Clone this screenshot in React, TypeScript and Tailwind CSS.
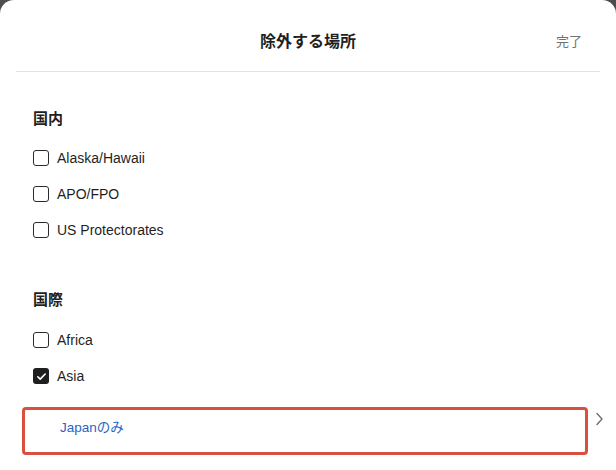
import React from "react";

const jp = "font-['Liberation_Sans','Noto_Sans_CJK_JP',sans-serif]";

interface Option {
  label: string;
  checked?: boolean;
}

const domestic: Option[] = [
  { label: "Alaska/Hawaii" },
  { label: "APO/FPO" },
  { label: "US Protectorates" },
];

const international: Option[] = [{ label: "Africa" }, { label: "Asia", checked: true }];

const CheckRow: React.FC<{ option: Option }> = ({ option }) => (
  <label className="flex items-center h-[36px] gap-[8px]">
    {option.checked ? (
      <span className="w-[16px] h-[16px] rounded-[3px] bg-[#1f1f1f] flex items-center justify-center">
        <svg width="11" height="11" viewBox="0 0 12 12" fill="none">
          <path d="M2 6.3l2.6 2.6L10 3.3" stroke="#fff" strokeWidth="1.8" strokeLinecap="round" strokeLinejoin="round" />
        </svg>
      </span>
    ) : (
      <span className="w-[16px] h-[16px] rounded-[3px] border-[1.5px] border-[#2a2a2a] bg-white" />
    )}
    <span className="text-[14px] text-[#1f1f1f] leading-none">{option.label}</span>
  </label>
);

const SectionTitle: React.FC<{ children: React.ReactNode }> = ({ children }) => (
  <h3 className="text-[15px] font-bold text-[#1f1f1f] leading-[22px]">{children}</h3>
);

export default function App() {
  return (
    <div className={`h-[470px] w-[616px] bg-[#4d4d4d] overflow-hidden ${jp}`}>
      <div className="h-full bg-white rounded-t-[14px] flex flex-col">
        {/* Header */}
        <div className="relative h-[71px] flex items-start justify-center">
          <h2 className="mt-[30px] text-[16px] font-bold text-[#1f1f1f] leading-[24px]">除外する場所</h2>
          <button className="absolute right-[34px] top-[33px] text-[13px] text-[#707070] leading-[18px]">完了</button>
        </div>
        <div className="mx-4 h-px bg-[#e2e2e2]" />

        {/* Content */}
        <div className="pl-[33px] pt-[36px]">
          <SectionTitle>国内</SectionTitle>
          <div className="mt-[10px]">
            {domestic.map((o) => (
              <CheckRow key={o.label} option={o} />
            ))}
          </div>

          <div className="mt-[41px]">
            <SectionTitle>国際</SectionTitle>
          </div>
          <div className="mt-[11px]">
            {international.map((o) => (
              <CheckRow key={o.label} option={o} />
            ))}
          </div>
        </div>

        {/* Japan only row */}
        <div className="relative mt-[12px] h-[48px]">
          <div className="absolute left-[22px] top-[1px] w-[566px] h-[48px] border-[3px] border-[#d9503f] rounded-[4px]" />
          <div className="absolute left-[60px] top-[12px] text-[13.5px] text-[#2a64c4] leading-[20px]">Japanのみ</div>
          <svg className="absolute left-[595px] top-[6px]" width="9" height="14" viewBox="0 0 9 14" fill="none">
            <path d="M2 1.5l5 5.5-5 5.5" stroke="#6f6f6f" strokeWidth="1.4" strokeLinecap="round" strokeLinejoin="round" />
          </svg>
        </div>
      </div>
    </div>
  );
}
